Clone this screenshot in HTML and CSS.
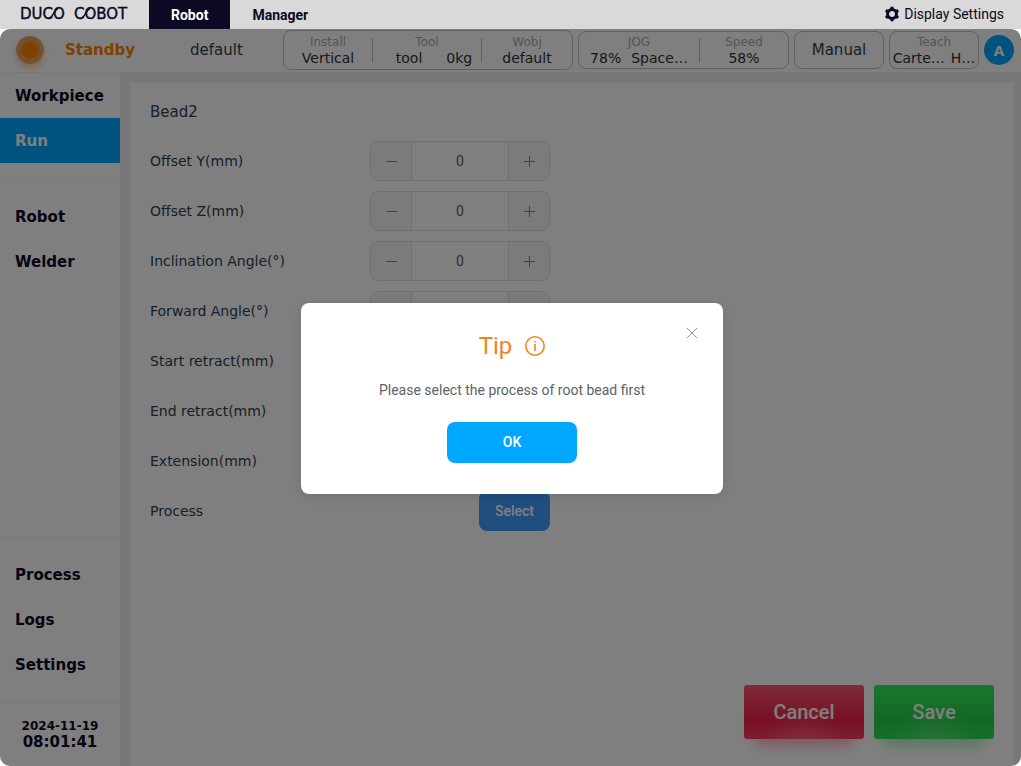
FILE: index.html
```html
<!DOCTYPE html>
<html lang="en">
<head>
    <meta charset="UTF-8">
    <title>DUCO COBOT</title>
    <link rel="stylesheet" href="styles.css">
</head>
<body>
<div class="top">
    <svg class="logo" width="110" height="18" viewBox="0 0 110 18" role="img" aria-label="DUCO COBOT">
        <text x="0" y="13">DUCO</text>
        <text x="54" y="13">COBOT</text>
        <path d="M29 12C33 12 34 3 38 3M61 12C65 12 66 3 70 3"/>
    </svg>
    <div class="tabs">
        <button class="tab on" type="button">Robot</button>
        <button class="tab" type="button">Manager</button>
    </div>
    <button class="display" type="button">
        <svg width="16" height="16" viewBox="0 0 16 16"><circle cx="8" cy="8" r="4.500"/><path d="M8 .8v2.700M8 12.500v2.700M1.760 4.400l2.340 1.350M11.900 10.250l2.340 1.350M1.760 11.600l2.340-1.350M11.900 5.750l2.340-1.350"/></svg>
        <span>Display Settings</span>
    </button>
</div>
<div class="frame">
    <header class="status">
        <i class="lamp"></i>
        <b class="state">Standby</b>
        <span class="program">default</span>
        <div class="groups">
            <div class="group tall">
                <div class="cell"><small>Install</small><p>Vertical</p></div>
                <div class="cell wide"><small>Tool</small><p class="spread"><span>tool</span><span>0kg</span></p></div>
                <div class="cell last"><small>Wobj</small><p>default</p></div>
            </div>
            <div class="group">
                <div class="cell jog"><small>JOG</small><p><span>78%</span><span>Space…</span></p></div>
                <div class="cell"><small>Speed</small><p>58%</p></div>
            </div>
            <button class="group mode" type="button">Manual</button>
            <div class="group">
                <div class="cell teach"><small>Teach</small><p><span>Carte…</span><span>H…</span></p></div>
            </div>
            <button class="avatar" type="button">A</button>
        </div>
    </header>
    <div class="body">
        <nav class="side">
            <div class="links first">
                <a href="#">Workpiece</a>
                <a href="#" class="on">Run</a>
            </div>
            <div class="links">
                <a href="#">Robot</a>
                <a href="#">Welder</a>
            </div>
            <div class="links low">
                <a href="#">Process</a>
                <a href="#">Logs</a>
                <a href="#">Settings</a>
            </div>
            <div class="clock">
                <span class="date">2024-11-19</span>
                <span class="time">08:01:41</span>
            </div>
        </nav>
        <main class="panel">
            <h1>Bead2</h1>
            <div class="row">
                <label for="oy">Offset Y(mm)</label>
                <div class="num"><button type="button" aria-label="minus" class="minus"></button><input id="oy" value="0"><button type="button" aria-label="plus" class="plus"></button></div>
            </div>
            <div class="row">
                <label for="oz">Offset Z(mm)</label>
                <div class="num"><button type="button" aria-label="minus" class="minus"></button><input id="oz" value="0"><button type="button" aria-label="plus" class="plus"></button></div>
            </div>
            <div class="row">
                <label for="ia">Inclination Angle(°)</label>
                <div class="num"><button type="button" aria-label="minus" class="minus"></button><input id="ia" value="0"><button type="button" aria-label="plus" class="plus"></button></div>
            </div>
            <div class="row">
                <label for="fa">Forward Angle(°)</label>
                <div class="num"><button type="button" aria-label="minus" class="minus"></button><input id="fa" value="0"><button type="button" aria-label="plus" class="plus"></button></div>
            </div>
            <div class="row">
                <label for="sr">Start retract(mm)</label>
                <div class="num"><button type="button" aria-label="minus" class="minus"></button><input id="sr" value="0"><button type="button" aria-label="plus" class="plus"></button></div>
            </div>
            <div class="row">
                <label for="er">End retract(mm)</label>
                <div class="num"><button type="button" aria-label="minus" class="minus"></button><input id="er" value="0"><button type="button" aria-label="plus" class="plus"></button></div>
            </div>
            <div class="row">
                <label for="ex">Extension(mm)</label>
                <div class="num"><button type="button" aria-label="minus" class="minus"></button><input id="ex" value="0"><button type="button" aria-label="plus" class="plus"></button></div>
            </div>
            <div class="row">
                <label for="ps">Process</label>
                <div class="pick"><button id="ps" class="select" type="button">Select</button></div>
            </div>
            <div class="actions">
                <button class="cancel" type="button">Cancel</button>
                <button class="save" type="button">Save</button>
            </div>
        </main>
    </div>
    <div class="mask">
        <div class="dialog" role="dialog" aria-labelledby="tip">
            <button class="close" type="button" aria-label="close">
                <svg width="12" height="12" viewBox="0 0 12 12"><path d="M1 1l10 10M11 1L1 11"/></svg>
            </button>
            <h2 id="tip">Tip
                <svg width="20" height="20" viewBox="0 0 20 20"><circle cx="10" cy="10" r="9.200"/><path d="M10 8v7M10 5v1.500"/></svg>
            </h2>
            <p>Please select the process of root bead first</p>
            <button class="ok" type="button">OK</button>
        </div>
    </div>
</div>
</body>
</html>
```
FILE: styles.css
```css
*{
    padding: 0;
    margin: 0;
    box-sizing: border-box;
}
html,body{
    height: 100%;
}
body{
    display: flex;
    flex-direction: column;
    background: #fff;
    color: #2c3e50;
    font: 14px/20px "DejaVu Sans",sans-serif;
    overflow: hidden;
}
button{
    border: 0;
    background: none;
    font-family: Roboto,sans-serif;
}
a{
    color: inherit;
    text-decoration: none;
}
/* top bar */
.top{
    height: 29px;
    flex: none;
    display: flex;
    align-items: center;
    background: #d9d9d9;
    color: #0c0924;
    padding: 0 17px 0 20px;
}
.logo{
    overflow: visible;
}
.logo text{
    font: 15px "DejaVu Sans",sans-serif;
    fill: #0c0924;
    stroke: #0c0924;
    stroke-width: .4;
}
.logo path{
    fill: none;
    stroke: #0c0924;
    stroke-width: 1.5;
}
.tabs{
    display: flex;
    margin-left: 19px;
    height: 100%;
}
.tab{
    padding: 1px 22px 0;
    font-size: 14px;
    font-weight: bold;
    color: #0c0924;
}
.tab.on{
    background: #0c0924;
    color: #fff;
}
.display{
    display: flex;
    align-items: center;
    gap: 4px;
    margin-left: auto;
    padding-bottom: 1px;
    font-size: 14px;
    color: #0c0924;
}
.display svg{
    fill: none;
    stroke: #0c0924;
    stroke-width: 3;
}
/* status line */
.frame{
    flex: 1;
    min-height: 0;
    position: relative;
    display: flex;
    flex-direction: column;
    border-radius: 10px;
    overflow: hidden;
    background: #fff;
}
.status{
    height: 44px;
    flex: none;
    display: flex;
    align-items: center;
    padding: 0 7px 2px 16px;
    border-bottom: 1px solid #f0f0f0;
    font-size: 15px;
}
.lamp{
    width: 28px;
    height: 28px;
    border-radius: 50%;
    background: radial-gradient(circle closest-side,#ff8000 52%,#eb9a4a 64%,#e0aa78);
    box-shadow: 0 4px 6px rgba(255,128,0,.4);
}
.state{
    margin-left: 21px;
    color: #ff8000;
}
.program{
    margin-left: 55px;
}
.groups{
    display: flex;
    align-items: center;
    gap: 5px;
    margin-left: auto;
}
.group{
    height: 38px;
    display: flex;
    align-items: center;
    border: 1px solid #c0c0c4;
    border-radius: 8px;
}
.tall{
    height: 40px;
}
.cell{
    width: 89px;
    height: 24px;
    text-align: center;
}
.tall .cell{
    width: 88px;
}
.cell + .cell{
    border-left: 1px solid #c0c0c4;
}
.tall .wide{
    width: 109px;
}
.tall .last{
    width: 91px;
}
.cell.jog{
    width: 120px;
}
.cell.teach{
    width: 88px;
}
.cell small{
    display: block;
    font-size: 12px;
    line-height: 8px;
    color: #a8abb2;
}
.cell p{
    display: flex;
    justify-content: center;
    gap: 10px;
    font-size: 14px;
    line-height: 14px;
    padding-top: 5px;
    color: #303133;
}
.cell p.spread{
    gap: 24px;
    padding-left: 14px;
}
.cell.teach p{
    gap: 6px;
}
.mode{
    width: 90px;
    justify-content: center;
    font: 15px "DejaVu Sans",sans-serif;
    color: #2c3e50;
}
.avatar{
    width: 30px;
    height: 30px;
    border-radius: 50%;
    background: #00a7ff;
    color: #fff;
    font: bold 15px "Noto Sans",sans-serif;
}
/* side menu */
.body{
    flex: 1;
    min-height: 0;
    display: flex;
    background: #f0f0f6;
}
.side{
    width: 120px;
    flex: none;
    display: flex;
    flex-direction: column;
    background: #fff;
    color: #0c0924;
    font-weight: bold;
    font-size: 15px;
}
.links{
    padding: 15px 0;
    border-top: 1px solid #f0f0f0;
}
.links.first{
    border: 0;
    padding-top: 0;
}
.links.low{
    margin-top: auto;
}
.links a{
    display: block;
    padding: 2px 15px 0;
    line-height: 43px;
}
.links a.on{
    background: #00a7ff;
    color: #fff;
}
.clock{
    height: 64px;
    padding-top: 15px;
    border-top: 1px solid #f0f0f0;
    text-align: center;
    line-height: 16px;
}
.clock span{
    display: block;
}
.clock .date{
    font-size: 12px;
}
/* form */
.panel{
    flex: 1;
    display: flex;
    flex-direction: column;
    margin: 10px 7px 0 10px;
    padding: 19px 20px 27px;
    background: #fff;
}
h1{
    font-size: 15px;
    font-weight: normal;
    margin-bottom: 19px;
}
.row{
    display: flex;
    align-items: center;
    height: 40px;
    margin-bottom: 10px;
}
.row label{
    width: 220px;
}
.num{
    width: 180px;
    height: 40px;
    display: flex;
    border: 1px solid #dcdfe6;
    border-radius: 8px;
    overflow: hidden;
}
.num input{
    flex: 1;
    min-width: 0;
    border: solid #dcdfe6;
    border-width: 0 1px;
    background: none;
    text-align: center;
    font: 14px Roboto,sans-serif;
    color: #606266;
}
.num button{
    width: 40px;
    background: linear-gradient(#84868a,#84868a) center/11px 1px no-repeat #f5f7fa;
}
.num .plus{
    background: linear-gradient(#84868a,#84868a) center/11px 1px no-repeat,linear-gradient(#84868a,#84868a) center/1px 11px no-repeat,#f5f7fa;
}
.pick{
    width: 180px;
    text-align: right;
}
.select{
    width: 71px;
    height: 40px;
    border-radius: 8px;
    background: #409eff;
    color: #fff;
    font-size: 14px;
    font-weight: 500;
}
.actions{
    display: flex;
    justify-content: flex-end;
    gap: 10px;
    margin-top: auto;
}
.actions button{
    width: 120px;
    height: 54px;
    border-radius: 3px;
    font-size: 20px;
    font-weight: 500;
    color: #fff;
}
.actions .cancel{
    background: radial-gradient(ellipse at 50% 115%,rgba(255,255,255,.18),transparent 50%),linear-gradient(#fe5571,#f01f48 66%,#fb3e62);
    box-shadow: 0 16px 14px -10px rgba(245,50,80,.4);
}
.actions .save{
    background: radial-gradient(ellipse at 50% 115%,rgba(255,255,255,.18),transparent 50%),linear-gradient(#2df057,#27cf4d 66%,#2ae052);
    box-shadow: 0 16px 14px -10px rgba(40,215,80,.4);
}
/* tip dialog */
.mask{
    position: absolute;
    inset: 0;
    display: flex;
    align-items: center;
    justify-content: center;
    padding: 2px 0 0 3px;
    background: rgba(0,0,0,.5);
}
.dialog{
    position: relative;
    width: 422px;
    padding: 27px 20px 31px;
    border-radius: 8px;
    background: #fff;
    text-align: center;
    font-family: Roboto,sans-serif;
    color: #606266;
    box-shadow: 0 2px 12px rgba(0,0,0,.1);
}
.dialog h2{
    display: flex;
    align-items: center;
    justify-content: center;
    gap: 13px;
    font-size: 24px;
    line-height: 32px;
    font-weight: normal;
    color: #f5831c;
}
.dialog h2 svg{
    fill: none;
    stroke: #f5831c;
    stroke-width: 1.6;
}
.dialog p{
    margin: 18px 0 22px;
}
.ok{
    width: 130px;
    height: 41px;
    padding-bottom: 2px;
    border-radius: 8px;
    background: #00a7ff;
    color: #fff;
    font-size: 14px;
    font-weight: 500;
}
.close{
    position: absolute;
    right: 25px;
    top: 24px;
    width: 12px;
    height: 12px;
}
.close svg{
    display: block;
    fill: none;
    stroke: #909399;
}
```
